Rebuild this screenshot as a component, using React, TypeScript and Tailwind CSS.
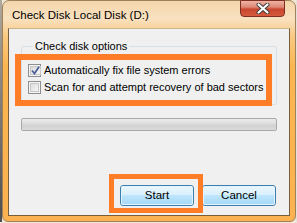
import React from "react";

const font = { fontFamily: '"Liberation Sans", Arial, sans-serif' };

function CheckBox({ checked }: { checked?: boolean }) {
  return (
    <span className="w-[13px] h-[13px] shrink-0 border border-[#8f8f8f] bg-[#f4f4f4] p-[1px] flex">
      <span className="flex-1 border border-[#c8c8c8] bg-gradient-to-br from-[#dcdcdc] to-[#f6f6f6] flex items-center justify-center">
        {checked && (
          <svg width="9" height="9" viewBox="0 0 9 9">
            <path d="M1 4.5 L3.5 7.5 L8 0.8" fill="none" stroke="#4c5f9a" strokeWidth="1.8" />
          </svg>
        )}
      </span>
    </span>
  );
}

function Button({ label }: { label: string }) {
  return (
    <button className="w-[74px] h-[21px] rounded-[3px] border border-[#3c7fb1] p-0 text-[11.5px] leading-none text-black flex">
      <span className="flex-1 rounded-[2px] border border-[#e2f3fd] bg-[linear-gradient(to_bottom,#eaf6fd_0%,#d9f0fc_45%,#bee6fd_50%,#a7d9f5_100%)] flex items-center justify-center">
        {label}
      </span>
    </button>
  );
}

export default function App() {
  return (
    <div className="w-[297px] h-[223px] flex bg-[#f2e6d6] whitespace-nowrap" style={font}>
      <div className="w-[2px] h-[222px] bg-gradient-to-b from-[#b0a89c] to-[#4e4e4e]" />
      <div className="w-[294px] h-[222px] rounded-t-[7px] rounded-b-[6px] border border-[#a0825a] flex flex-col bg-[linear-gradient(to_bottom,#f4d6ab_0%,#f9e1c0_8%,#f8c981_16%,#fbb551_30%,#fcb250_100%)]">
        <div className="h-[27px] flex items-start pl-[9px] pr-[10px]">
          <span className="mt-[6px] text-[11.5px] text-black">Check Disk Local Disk (D:)</span>
          <div className="ml-auto w-[45px] h-[17px] -mt-[1px] rounded-b-[4px] border border-[#7e2f22] bg-[linear-gradient(to_bottom,#eeb2a4_0%,#de8a78_40%,#c8452e_55%,#d65a3e_100%)] flex items-center justify-center">
            <svg width="14" height="11" viewBox="0 0 14 11">
              <path d="M2.5 1.5 L11.5 9.5 M11.5 1.5 L2.5 9.5" stroke="#3a3a3a" strokeWidth="4" strokeLinecap="round" />
              <path d="M2.5 1.5 L11.5 9.5 M11.5 1.5 L2.5 9.5" stroke="#ffffff" strokeWidth="2.2" strokeLinecap="round" />
            </svg>
          </div>
        </div>
        <div className="mx-[5px] h-[188px] border border-[#775d3a] border-t-[#c9b690] bg-[#f0f0f0] relative flex flex-col px-[12px]">
          <fieldset className="mt-[9px] border border-[#d5dfe5] rounded-[3px] pl-[6px] pb-[8px]">
            <legend className="ml-[5px] px-[2px] text-[11px] leading-[16px] text-black">Check disk options</legend>
            <div className="flex flex-col pt-[8px]">
              <label className="h-[17px] flex items-center gap-[3px] text-[11px] text-black">
                <CheckBox checked />
                <span>Automatically fix file system errors</span>
              </label>
              <label className="h-[17px] flex items-center gap-[3px] text-[11px] text-black">
                <CheckBox />
                <span>Scan for and attempt recovery of bad sectors</span>
              </label>
            </div>
          </fieldset>
          <div className="mt-[13px] h-[13px] rounded-[2px] border border-[#a9a9a9] bg-[linear-gradient(to_bottom,#ececec_0%,#dedede_40%,#d2d2d2_60%,#dcdcdc_100%)]" />
          <div className="mt-[54px] flex justify-end gap-[8px] mr-[1px]">
            <Button label="Start" />
            <Button label="Cancel" />
          </div>
          <div className="absolute left-[6px] top-[25px] w-[257px] h-[52px] border-[6px] border-[#ff7d26]" />
          <div className="absolute left-[100px] top-[145px] w-[94px] h-[39px] border-[5px] border-[#ff7d26]" />
        </div>
      </div>
      <div className="w-[1px] h-[222px] bg-[#e6e0d8]" />
    </div>
  );
}
